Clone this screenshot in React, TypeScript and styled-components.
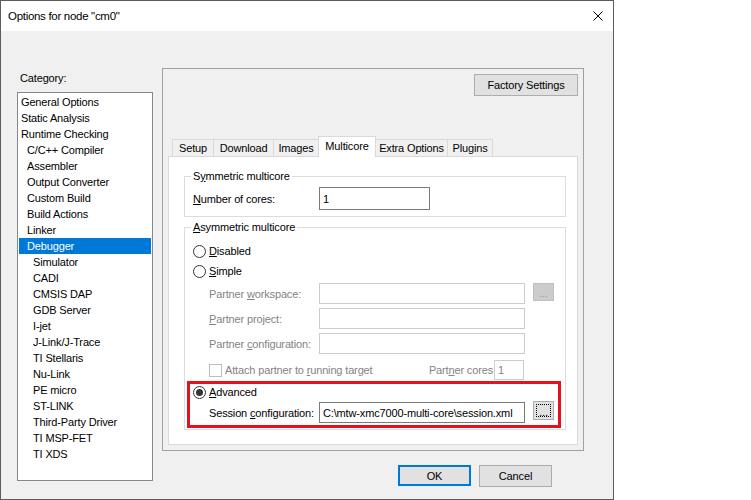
import React from "react";
import styled, { createGlobalStyle } from "styled-components";

const GlobalStyle = createGlobalStyle`
  html, body { margin: 0; padding: 0; background: #ffffff; }
  body {
    font-family: "Liberation Sans", Arial, sans-serif;
    font-size: 11px;
    color: #000000;
    letter-spacing: -0.15px;
  }
  * { box-sizing: border-box; }
`;

const $disabledText = `#838383`;

const Window = styled.div`
  width: 614px;
  height: 500px;
  border: 1px solid #5b5b5b;
  background: #f0f0f0;
  display: flex;
  flex-direction: column;
`;

const TitleBar = styled.div`
  height: 30px;
  flex-shrink: 0;
  background: #ffffff;
  display: flex;
  align-items: center;
  justify-content: space-between;
  padding: 0 10px 0 7px;
`;

const Title = styled.span`
  font-size: 11.5px;
  letter-spacing: -0.3px;
`;

const Body = styled.div`
  flex: 1;
  display: flex;
  padding: 37px 0 0 16px;
`;

const Sidebar = styled.div`
  width: 136px;
  display: flex;
  flex-direction: column;
`;

const CategoryLabel = styled.div`
  margin-top: 3px;
  margin-bottom: 7px;
  padding-left: 3px;
  height: 14px;
  line-height: 14px;
`;

const CategoryList = styled.ul`
  list-style: none;
  margin: 0;
  height: 389px;
  padding: 1px;
  border: 1px solid #828790;
  background: #ffffff;
`;

const CategoryItem = styled.li<{ $level: number; $selected?: boolean }>`
  height: 16px;
  line-height: 16px;
  white-space: nowrap;
  padding-left: ${(p) => 2 + p.$level * 6}px;
  background: ${(p) => (p.$selected ? "#0078d7" : "transparent")};
  color: ${(p) => (p.$selected ? "#ffffff" : "#000000")};
`;

const Main = styled.div`
  margin-left: 9px;
  width: 422px;
  display: flex;
  flex-direction: column;
`;

const Frame = styled.div`
  height: 383px;
  border: 1px solid #a0a0a0;
  padding: 5px;
  display: flex;
  flex-direction: column;
`;

const FactoryRow = styled.div`
  display: flex;
  justify-content: flex-end;
`;

const Button = styled.div<{ $w: number; $default?: boolean }>`
  width: ${(p) => p.$w}px;
  height: ${(p) => (p.$default ? 21 : 22)}px;
  display: flex;
  align-items: center;
  justify-content: center;
  background: #e1e1e1;
  border: ${(p) => (p.$default ? "2px solid #0078d7" : "1px solid #adadad")};
`;

const TabStrip = styled.div`
  margin-top: 40px;
  height: 21px;
  padding-left: 4px;
  display: flex;
  align-items: flex-end;
  position: relative;
  z-index: 1;
`;

const Tab = styled.div<{ $w: number; $active?: boolean }>`
  width: ${(p) => p.$w}px;
  height: ${(p) => (p.$active ? 21 : 17)}px;
  margin-bottom: ${(p) => (p.$active ? 0 : 1)}px;
  margin-left: -1px;
  border: 1px solid #d9d9d9;
  border-bottom: none;
  background: ${(p) => (p.$active ? "#ffffff" : "#f0f0f0")};
  text-align: center;
  line-height: ${(p) => (p.$active ? 18 : 16)}px;
  position: relative;
  z-index: ${(p) => (p.$active ? 2 : 1)};
  &:first-child { margin-left: 0; }
`;

const Pane = styled.div`
  height: 289px;
  margin-top: -1px;
  border: 1px solid #d9d9d9;
  background: #ffffff;
  padding: 12px 11px 0 15px;
`;

const Group = styled.fieldset<{ $gap?: number; $top?: number }>`
  margin: ${(p) => p.$gap || 0}px 0 0 0;
  min-width: 0;
  border: 1px solid #dcdcdc;
  padding: ${(p) => p.$top || 4}px 8px 6px 8px;
`;

const GroupTitle = styled.legend`
  padding: 0 2px;
  margin-left: -2px;
  height: 14px;
  line-height: 14px;
`;

const Key = styled.span`
  text-decoration: underline;
  text-underline-offset: 1px;
`;

const FieldRow = styled.div<{ $h?: number }>`
  display: flex;
  align-items: center;
  height: ${(p) => p.$h || 21}px;
`;

const FieldLabel = styled.span<{ $w?: number; $disabled?: boolean }>`
  width: ${(p) => p.$w || 110}px;
  flex-shrink: 0;
  white-space: nowrap;
  color: ${(p) => (p.$disabled ? $disabledText : "#000000")};
`;

const TextBox = styled.div<{ $w: number; $h?: number; $disabled?: boolean; $mr?: number }>`
  width: ${(p) => p.$w}px;
  height: ${(p) => p.$h || 21}px;
  margin-right: ${(p) => p.$mr || 0}px;
  border: 1px solid ${(p) => (p.$disabled ? "#cccccc" : "#7a7a7a")};
  background: #ffffff;
  padding: 0 3px;
  display: flex;
  align-items: center;
  white-space: nowrap;
  overflow: hidden;
  color: ${(p) => (p.$disabled ? $disabledText : "#000000")};
`;

const BrowseButton = styled.div<{ $disabled?: boolean }>`
  margin-left: 8px;
  width: 21px;
  height: ${(p) => (p.$disabled ? 18 : 19)}px;
  align-self: flex-start;
  margin-top: ${(p) => (p.$disabled ? 0 : -1)}px;
  background: ${(p) => (p.$disabled ? "#cccccc" : "#e1e1e1")};
  border: 1px solid ${(p) => (p.$disabled ? "#bfbfbf" : "#adadad")};
  color: ${(p) => (p.$disabled ? "#9a9a9a" : "#000000")};
  display: flex;
  align-items: flex-end;
  justify-content: center;
  line-height: 10px;
  padding-bottom: 2px;
  position: relative;
  &::after {
    content: "";
    display: ${(p) => (p.$disabled ? "none" : "block")};
    position: absolute;
    inset: 2px;
    border: 1px dotted #000000;
  }
`;

const RadioRow = styled.div`
  display: flex;
  align-items: center;
  height: 20px;
  gap: 3px;
`;

const Radio = styled.span<{ $checked?: boolean }>`
  width: 13px;
  height: 13px;
  border: 1px solid #333333;
  border-radius: 50%;
  background: #ffffff;
  position: relative;
  flex-shrink: 0;
  &::after {
    content: "";
    display: ${(p) => (p.$checked ? "block" : "none")};
    position: absolute;
    inset: 2px;
    border-radius: 50%;
    background: #333333;
  }
`;

const PartnerBlock = styled.div`
  margin-top: 2px;
  padding-left: 16px;
  display: flex;
  flex-direction: column;
  gap: 4px;
`;

const CheckRow = styled.div`
  margin-top: 6px;
  padding-left: 16px;
  width: 332px;
  height: 20px;
  display: flex;
  align-items: center;
`;

const CheckBox = styled.span`
  width: 13px;
  height: 13px;
  border: 1px solid #bcbcbc;
  background: #ffffff;
  margin-right: 3px;
  flex-shrink: 0;
`;

const CheckLabel = styled.span`
  flex: 1;
  color: ${$disabledText};
  white-space: nowrap;
`;

const CoresLabel = styled.span`
  color: ${$disabledText};
  white-space: nowrap;
  margin-right: 1px;
`;

const Highlight = styled.div`
  margin-top: 2px;
  position: relative;
  &::after {
    content: "";
    position: absolute;
    top: -1px;
    left: -6px;
    right: -4px;
    bottom: -5px;
    border: 3px solid #e5121c;
    pointer-events: none;
  }
`;

const Indented = styled.div`
  padding-left: 16px;
`;

const DialogButtons = styled.div`
  margin-top: 14px;
  padding-right: 32px;
  display: flex;
  justify-content: flex-end;
  gap: 8px;
`;

const categories: [string, number][] = [
  ["General Options", 0],
  ["Static Analysis", 0],
  ["Runtime Checking", 0],
  ["C/C++ Compiler", 1],
  ["Assembler", 1],
  ["Output Converter", 1],
  ["Custom Build", 1],
  ["Build Actions", 1],
  ["Linker", 1],
  ["Debugger", 1],
  ["Simulator", 2],
  ["CADI", 2],
  ["CMSIS DAP", 2],
  ["GDB Server", 2],
  ["I-jet", 2],
  ["J-Link/J-Trace", 2],
  ["TI Stellaris", 2],
  ["Nu-Link", 2],
  ["PE micro", 2],
  ["ST-LINK", 2],
  ["Third-Party Driver", 2],
  ["TI MSP-FET", 2],
  ["TI XDS", 2],
];

const tabs: [string, number][] = [
  ["Setup", 42],
  ["Download", 61],
  ["Images", 46],
  ["Multicore", 58],
  ["Extra Options", 73],
  ["Plugins", 46],
];

const CloseIcon = () => (
  <svg width="10" height="10" viewBox="0 0 10 10">
    <path d="M0.5 0.5 L9.5 9.5 M9.5 0.5 L0.5 9.5" stroke="#000" strokeWidth="1" />
  </svg>
);

export default function App() {
  return (
    <>
      <GlobalStyle />
      <Window>
        <TitleBar>
          <Title>Options for node "cm0"</Title>
          <CloseIcon />
        </TitleBar>
        <Body>
          <Sidebar>
            <CategoryLabel>Category:</CategoryLabel>
            <CategoryList>
              {categories.map(([name, level]) => (
                <CategoryItem key={name} $level={level} $selected={name === "Debugger"}>
                  {name}
                </CategoryItem>
              ))}
            </CategoryList>
          </Sidebar>
          <Main>
            <Frame>
              <FactoryRow>
                <Button $w={104}>Factory Settings</Button>
              </FactoryRow>
              <TabStrip>
                {tabs.map(([name, w]) => (
                  <Tab key={name} $w={w} $active={name === "Multicore"}>
                    {name}
                  </Tab>
                ))}
              </TabStrip>
              <Pane>
                <Group>
                  <GroupTitle>
                    S<Key>y</Key>mmetric multicore
                  </GroupTitle>
                  <FieldRow $h={23}>
                    <FieldLabel $w={126}>
                      <Key>N</Key>umber of cores:
                    </FieldLabel>
                    <TextBox $w={111} $h={23}>1</TextBox>
                  </FieldRow>
                </Group>
                <Group $gap={3} $top={7}>
                  <GroupTitle>
                    <Key>A</Key>symmetric multicore
                  </GroupTitle>
                  <RadioRow>
                    <Radio />
                    <span>
                      <Key>D</Key>isabled
                    </span>
                  </RadioRow>
                  <RadioRow>
                    <Radio />
                    <span>
                      <Key>S</Key>imple
                    </span>
                  </RadioRow>
                  <PartnerBlock>
                    <FieldRow>
                      <FieldLabel $disabled>
                        Partner <Key>w</Key>orkspace:
                      </FieldLabel>
                      <TextBox $w={206} $disabled />
                      <BrowseButton $disabled>...</BrowseButton>
                    </FieldRow>
                    <FieldRow>
                      <FieldLabel $disabled>
                        <Key>P</Key>artner project:
                      </FieldLabel>
                      <TextBox $w={206} $disabled />
                    </FieldRow>
                    <FieldRow>
                      <FieldLabel $disabled>
                        Partner <Key>c</Key>onfiguration:
                      </FieldLabel>
                      <TextBox $w={206} $disabled />
                    </FieldRow>
                  </PartnerBlock>
                  <CheckRow>
                    <CheckBox />
                    <CheckLabel>
                      Attach partner to <Key>r</Key>unning target
                    </CheckLabel>
                    <CoresLabel>
                      Part<Key>n</Key>er cores
                    </CoresLabel>
                    <TextBox $w={30} $h={20} $disabled $mr={1}>
                      1
                    </TextBox>
                  </CheckRow>
                  <Highlight>
                    <RadioRow>
                      <Radio $checked />
                      <span>
                        <Key>A</Key>dvanced
                      </span>
                    </RadioRow>
                    <Indented>
                      <FieldRow>
                        <FieldLabel>
                          Session <Key>c</Key>onfiguration:
                        </FieldLabel>
                        <TextBox $w={206}>C:\mtw-xmc7000-multi-core\session.xml</TextBox>
                        <BrowseButton>...</BrowseButton>
                      </FieldRow>
                    </Indented>
                  </Highlight>
                </Group>
              </Pane>
            </Frame>
            <DialogButtons>
              <Button $w={73} $default>
                OK
              </Button>
              <Button $w={73}>Cancel</Button>
            </DialogButtons>
          </Main>
        </Body>
      </Window>
    </>
  );
}
